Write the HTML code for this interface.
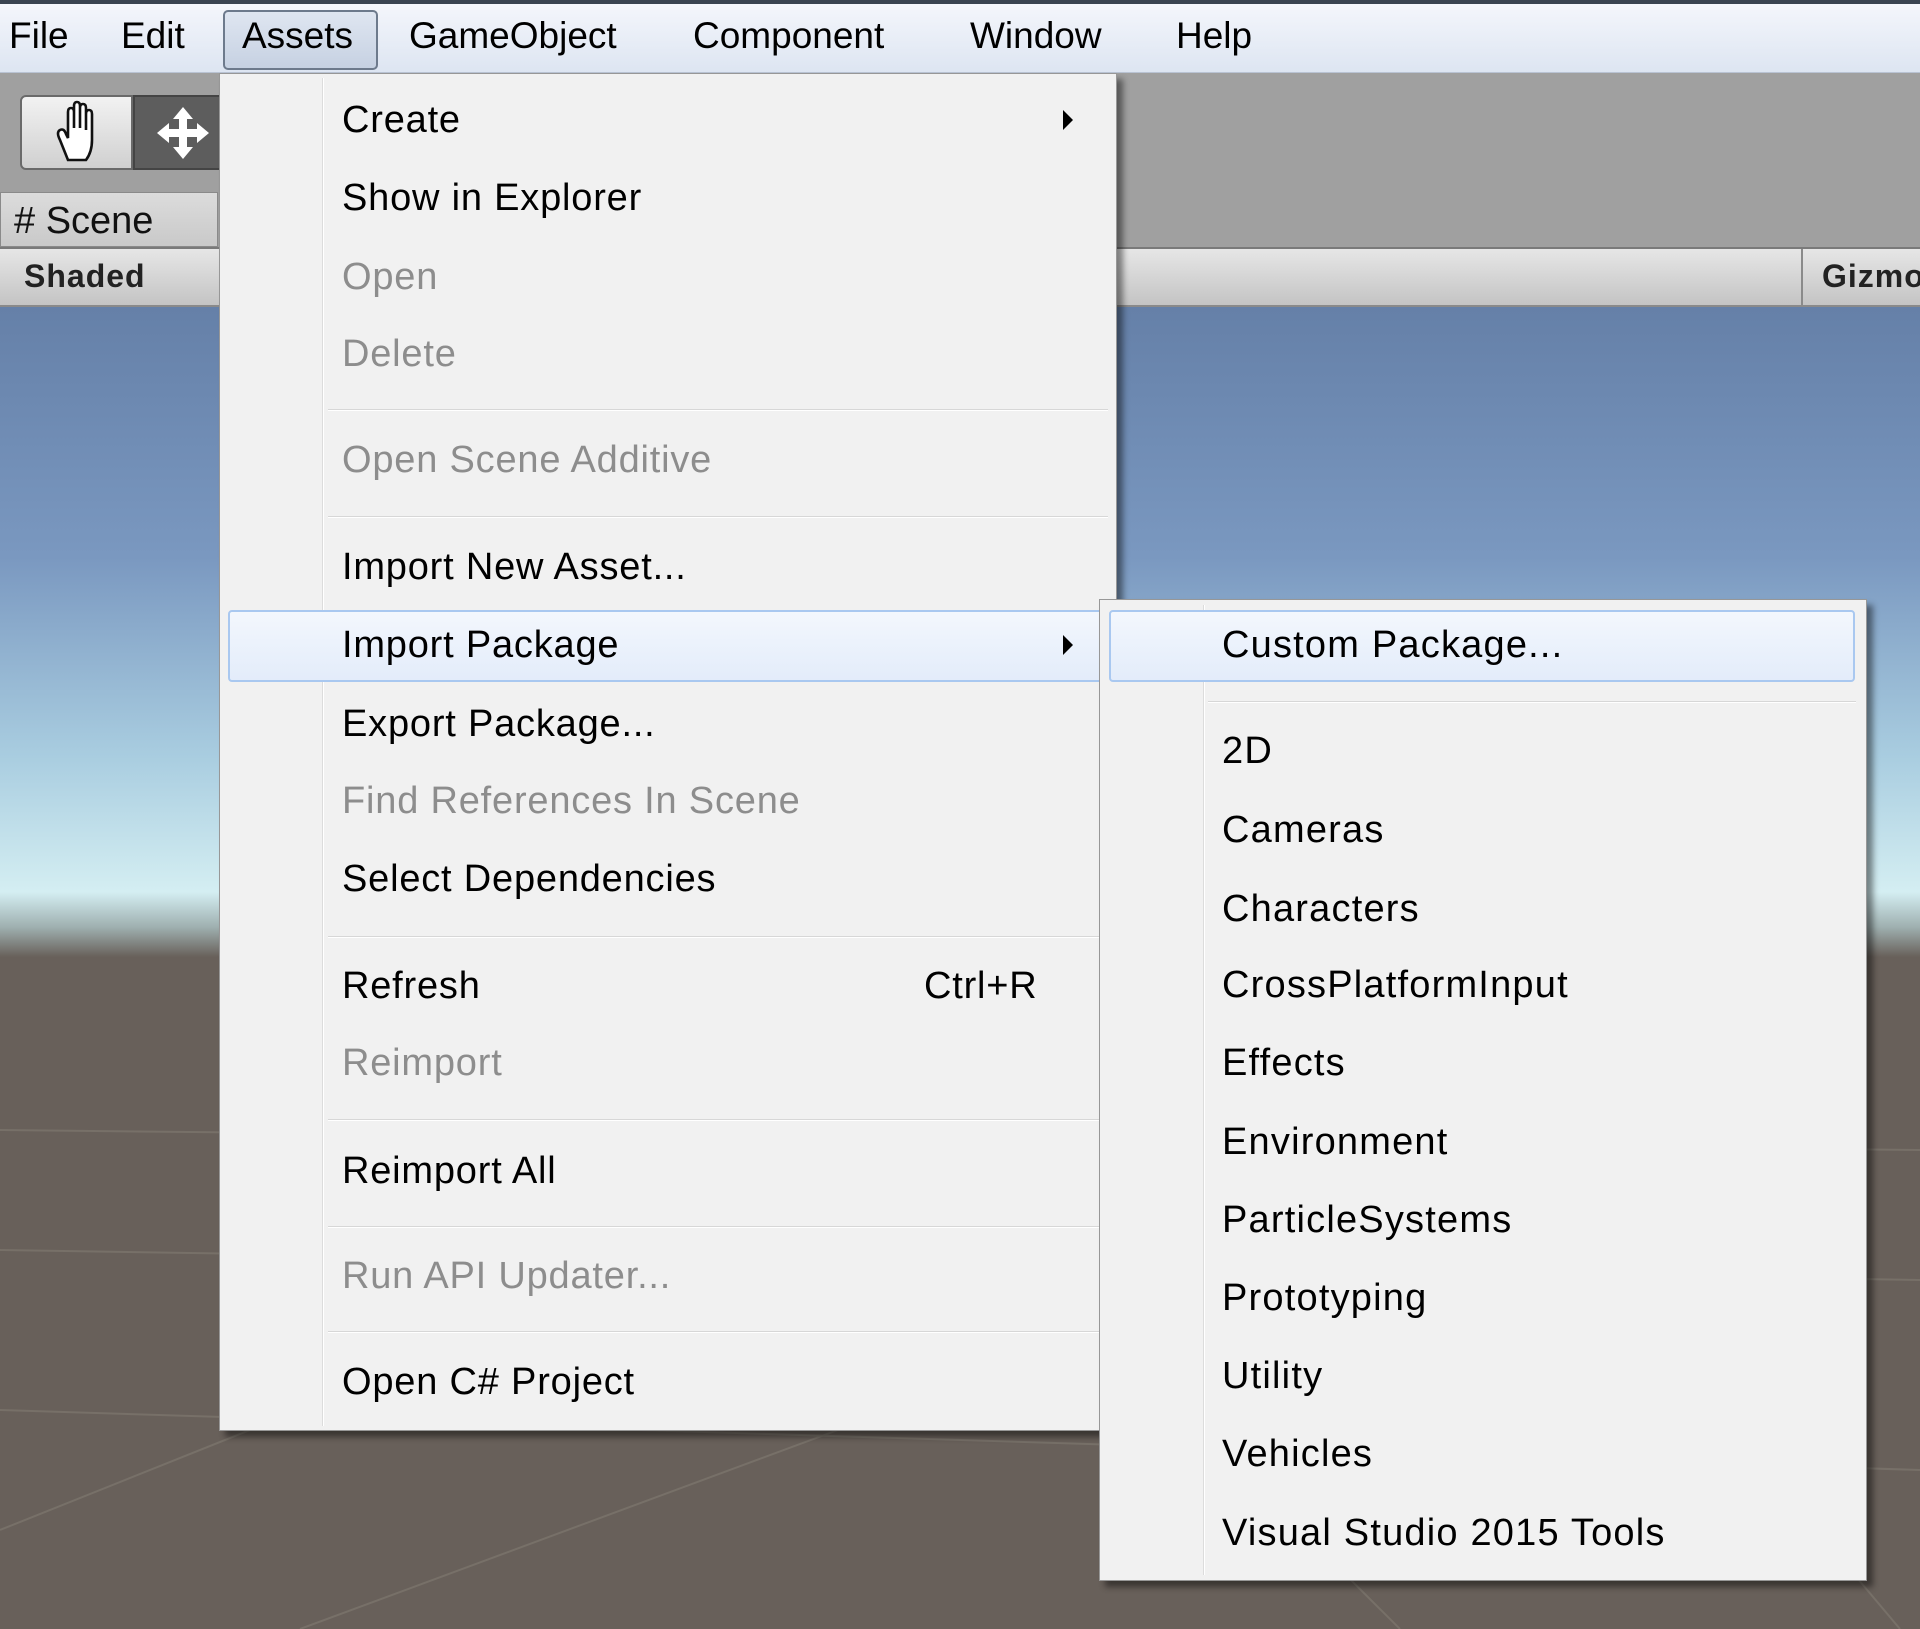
<!DOCTYPE html>
<html><head><meta charset="utf-8"><style>
*{margin:0;padding:0;box-sizing:border-box}
body{width:1920px;height:1629px;position:relative;overflow:hidden;font-family:"Liberation Sans",sans-serif;background:#68605a}
.abs{position:absolute}
.sky{left:0;top:307px;width:1920px;height:650px;background:linear-gradient(#6580a8 0px,#7a98c0 250px,#a9cde0 450px,#d4eef2 585px,#9fb0b0 620px,#68605a 650px)}
.mb{left:0;top:0;width:1920px;height:73px;background:linear-gradient(#f4f6fb,#dde5f2);border-top:4px solid #3a4450;border-bottom:1px solid #b9c3d3}
.mbi{top:14px;font-size:37px;color:#000;line-height:44px}
.tb{left:0;top:73px;width:1920px;height:174px;background:#a0a0a0}
.sh{left:0;top:247px;width:1920px;height:60px;background:linear-gradient(#e6e6e6,#c4c4c4);border-top:2px solid #7a7a7a;border-bottom:2px solid #8a8a8a}
.menu{background:#f1f1f1;border:1px solid #979797;box-shadow:6px 6px 6px rgba(0,0,0,.45)}
.it{font-size:38px;line-height:44px;color:#000;white-space:nowrap;letter-spacing:0.8px}
.sub .it,.it.s{letter-spacing:1.2px}
.dis{color:#8d8d8d}
.sep{height:2px;background:#d7d7d7;border-bottom:1px solid #fff}
.hl{background:linear-gradient(#f3f7fd,#e3ecfa);border:2px solid #a9c8f0;border-radius:4px}
.arr{width:0;height:0;border-top:10px solid transparent;border-bottom:10px solid transparent;border-left:10px solid #000}
</style></head><body>
<div class="abs sky"></div>
<svg class="abs" style="left:0;top:950px" width="1920" height="679"><g stroke="#777068" stroke-width="2" fill="none">
<line x1="0" y1="460" x2="1920" y2="520"/><line x1="0" y1="300" x2="1920" y2="330"/><line x1="0" y1="180" x2="1920" y2="200"/>
<line x1="0" y1="580" x2="500" y2="380"/><line x1="300" y1="679" x2="1000" y2="420"/><line x1="1400" y1="679" x2="1120" y2="400"/><line x1="1900" y1="679" x2="1800" y2="560"/></g></svg>
<div class="abs mb"></div>
<div class="abs" style="left:223px;top:10px;width:155px;height:60px;border:2px solid #6d7a8c;border-radius:5px;background:linear-gradient(#dfe6f1,#c6d1e2)"></div>
<div class="abs mbi" style="left:9px">File</div>
<div class="abs mbi" style="left:121px">Edit</div>
<div class="abs mbi" style="left:242px">Assets</div>
<div class="abs mbi" style="left:409px">GameObject</div>
<div class="abs mbi" style="left:693px">Component</div>
<div class="abs mbi" style="left:970px">Window</div>
<div class="abs mbi" style="left:1176px">Help</div>
<div class="abs tb"></div>
<div class="abs" style="left:20px;top:95px;width:113px;height:75px;background:linear-gradient(#f2f2f2,#d0d0d0);border:2px solid #6a6a6a;border-radius:6px 0 0 6px"></div>
<div class="abs" style="left:133px;top:95px;width:90px;height:75px;background:#5d5d5d;border:2px solid #444"></div>
<svg class="abs" style="left:50px;top:100px" width="56" height="64" viewBox="0 0 28 32"><path d="M9 30 L5 20 Q3 16 5 15 Q7 14 8 17 L9 19 L9 6 Q9 4 10.5 4 Q12 4 12 6 L12 14 L12 3 Q12 1 13.5 1 Q15 1 15 3 L15 14 L15 4 Q15 2 16.5 2 Q18 2 18 4 L18 15 L18 7 Q18 5 19.5 5 Q21 5 21 7 L21 20 Q21 26 18 30 Z" fill="#fff" stroke="#111" stroke-width="1.3"/></svg>
<svg class="abs" style="left:155px;top:105px" width="56" height="56" viewBox="0 0 28 28"><path d="M14 1 L19 7 L16 7 L16 12 L21 12 L21 9 L27 14 L21 19 L21 16 L16 16 L16 21 L19 21 L14 27 L9 21 L12 21 L12 16 L7 16 L7 19 L1 14 L7 9 L7 12 L12 12 L12 7 L9 7 Z" fill="#fff"/></svg>
<div class="abs" style="left:0;top:192px;width:218px;height:55px;background:linear-gradient(#dcdcdc,#c9c9c9);border:1px solid #8a8a8a"></div>
<div class="abs" style="left:14px;top:200px;font-size:38px;color:#111">#&nbsp;Scene</div>
<div class="abs sh"></div>
<div class="abs" style="left:24px;top:258px;font-size:32px;font-weight:bold;color:#222;letter-spacing:1px">Shaded</div>
<div class="abs" style="left:1801px;top:249px;width:2px;height:56px;background:#8a8a8a"></div>
<div class="abs" style="left:1822px;top:258px;font-size:32px;font-weight:bold;color:#222;letter-spacing:1px">Gizmos</div>

<div class="abs menu" style="left:219px;top:73px;width:898px;height:1358px"></div>
<div class="abs" style="left:322px;top:78px;width:2px;height:1348px;background:#dcdcdc;border-right:1px solid #fff"></div>
<div class="abs hl" style="left:228px;top:610px;width:880px;height:72px"></div>
<div class="abs it" style="left:342px;top:98px">Create</div>
<div class="abs arr" style="left:1063px;top:110px"></div>
<div class="abs it" style="left:342px;top:176px">Show in Explorer</div>
<div class="abs it dis" style="left:342px;top:255px">Open</div>
<div class="abs it dis" style="left:342px;top:332px">Delete</div>
<div class="abs sep" style="left:328px;top:409px;width:780px"></div>
<div class="abs it dis" style="left:342px;top:438px">Open Scene Additive</div>
<div class="abs sep" style="left:328px;top:516px;width:780px"></div>
<div class="abs it" style="left:342px;top:545px">Import New Asset...</div>
<div class="abs it" style="left:342px;top:623px">Import Package</div>
<div class="abs arr" style="left:1063px;top:635px"></div>
<div class="abs it" style="left:342px;top:702px">Export Package...</div>
<div class="abs it dis" style="left:342px;top:779px">Find References In Scene</div>
<div class="abs it" style="left:342px;top:857px">Select Dependencies</div>
<div class="abs sep" style="left:328px;top:936px;width:780px"></div>
<div class="abs it" style="left:342px;top:964px">Refresh</div>
<div class="abs it" style="left:924px;top:964px">Ctrl+R</div>
<div class="abs it dis" style="left:342px;top:1041px">Reimport</div>
<div class="abs sep" style="left:328px;top:1119px;width:780px"></div>
<div class="abs it" style="left:342px;top:1149px">Reimport All</div>
<div class="abs sep" style="left:328px;top:1226px;width:780px"></div>
<div class="abs it dis" style="left:342px;top:1254px">Run API Updater...</div>
<div class="abs sep" style="left:328px;top:1331px;width:780px"></div>
<div class="abs it" style="left:342px;top:1360px">Open C# Project</div>

<div class="abs menu" style="left:1099px;top:599px;width:768px;height:982px"></div>
<div class="abs" style="left:1203px;top:605px;width:2px;height:970px;background:#dcdcdc;border-right:1px solid #fff"></div>
<div class="abs hl" style="left:1109px;top:610px;width:746px;height:72px"></div>
<div class="abs it s" style="left:1222px;top:623px">Custom Package...</div>
<div class="abs sep" style="left:1208px;top:701px;width:648px"></div>
<div class="abs it s" style="left:1222px;top:729px">2D</div>
<div class="abs it s" style="left:1222px;top:808px">Cameras</div>
<div class="abs it s" style="left:1222px;top:887px">Characters</div>
<div class="abs it s" style="left:1222px;top:963px">CrossPlatformInput</div>
<div class="abs it s" style="left:1222px;top:1041px">Effects</div>
<div class="abs it s" style="left:1222px;top:1120px">Environment</div>
<div class="abs it s" style="left:1222px;top:1198px">ParticleSystems</div>
<div class="abs it s" style="left:1222px;top:1276px">Prototyping</div>
<div class="abs it s" style="left:1222px;top:1354px">Utility</div>
<div class="abs it s" style="left:1222px;top:1432px">Vehicles</div>
<div class="abs it s" style="left:1222px;top:1511px">Visual Studio 2015 Tools</div>
</body></html>
